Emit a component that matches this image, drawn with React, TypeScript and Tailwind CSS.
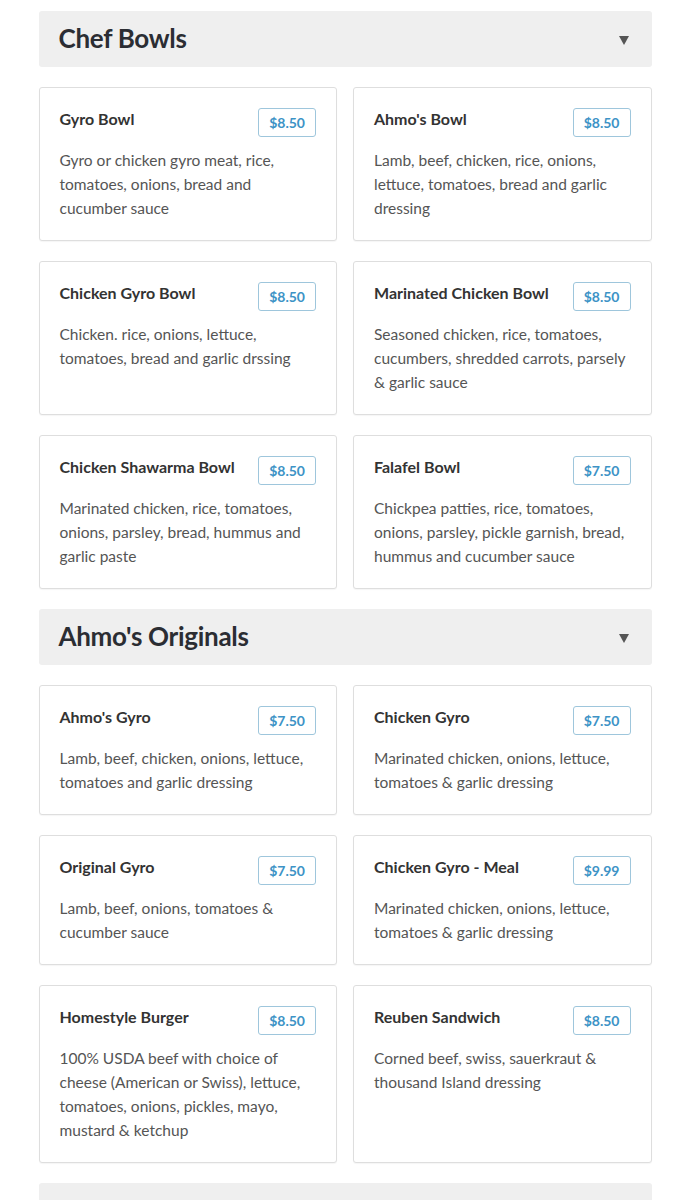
import React from "react";

type Item = { name: string; price: string; desc: string };

const chefBowls: Item[] = [
  { name: "Gyro Bowl", price: "$8.50", desc: "Gyro or chicken gyro meat, rice, tomatoes, onions, bread and cucumber sauce" },
  { name: "Ahmo's Bowl", price: "$8.50", desc: "Lamb, beef, chicken, rice, onions, lettuce, tomatoes, bread and garlic dressing" },
  { name: "Chicken Gyro Bowl", price: "$8.50", desc: "Chicken. rice, onions, lettuce, tomatoes, bread and garlic drssing" },
  { name: "Marinated Chicken Bowl", price: "$8.50", desc: "Seasoned chicken, rice, tomatoes, cucumbers, shredded carrots, parsely & garlic sauce" },
  { name: "Chicken Shawarma Bowl", price: "$8.50", desc: "Marinated chicken, rice, tomatoes, onions, parsley, bread, hummus and garlic paste" },
  { name: "Falafel Bowl", price: "$7.50", desc: "Chickpea patties, rice, tomatoes, onions, parsley, pickle garnish, bread, hummus and cucumber sauce" },
];

const originals: Item[] = [
  { name: "Ahmo's Gyro", price: "$7.50", desc: "Lamb, beef, chicken, onions, lettuce, tomatoes and garlic dressing" },
  { name: "Chicken Gyro", price: "$7.50", desc: "Marinated chicken, onions, lettuce, tomatoes & garlic dressing" },
  { name: "Original Gyro", price: "$7.50", desc: "Lamb, beef, onions, tomatoes & cucumber sauce" },
  { name: "Chicken Gyro - Meal", price: "$9.99", desc: "Marinated chicken, onions, lettuce, tomatoes & garlic dressing" },
  { name: "Homestyle Burger", price: "$8.50", desc: "100% USDA beef with choice of cheese (American or Swiss), lettuce, tomatoes, onions, pickles, mayo, mustard & ketchup" },
  { name: "Reuben Sandwich", price: "$8.50", desc: "Corned beef, swiss, sauerkraut & thousand Island dressing" },
];

function Header({ title }: { title?: string }) {
  return (
    <div className="flex h-[56px] items-center justify-between rounded-[3px] bg-[#efefef] pl-[20px] pr-[23px]">
      <h2 className="-mt-[3px] text-[26px] font-bold leading-none tracking-[-0.3px] text-[#2b2d33]">{title}</h2>
      <svg width="10" height="9" viewBox="0 0 10 9" className="mt-[2px]">
        <polygon points="0,0 10,0 5,9" fill="#555" />
      </svg>
    </div>
  );
}

function Card({ item }: { item: Item }) {
  return (
    <div className="rounded-[3px] border border-[#dedede] bg-white p-[20px] shadow-[0_1px_1px_rgba(0,0,0,0.04)]">
      <div className="flex items-start justify-between gap-3">
        <div className="pt-[1px] text-[16px] font-bold leading-[20px] text-[#333]">{item.name}</div>
        <div className="flex h-[29px] shrink-0 items-center rounded-[3px] border border-[#9ec6dc] px-[10px] text-[14px] font-bold text-[#3d93c6]">
          {item.price}
        </div>
      </div>
      <p className="mt-[11px] text-[15.5px] leading-[24px] text-[#555]">{item.desc}</p>
    </div>
  );
}

function Section({ title, items }: { title: string; items: Item[] }) {
  return (
    <div>
      <Header title={title} />
      <div className="mt-[20px] grid grid-cols-2 gap-x-[16px] gap-y-[20px]">
        {items.map((it) => (
          <Card key={it.name} item={it} />
        ))}
      </div>
    </div>
  );
}

export default function App() {
  return (
    <div className="min-h-[1200px] bg-white" style={{ fontFamily: "Lato, 'Noto Sans', sans-serif" }}>
      <div className="mx-auto flex w-[613px] flex-col gap-[20px] pt-[11px]">
        <Section title="Chef Bowls" items={chefBowls} />
        <Section title="Ahmo's Originals" items={originals} />
        <Header />
      </div>
    </div>
  );
}
